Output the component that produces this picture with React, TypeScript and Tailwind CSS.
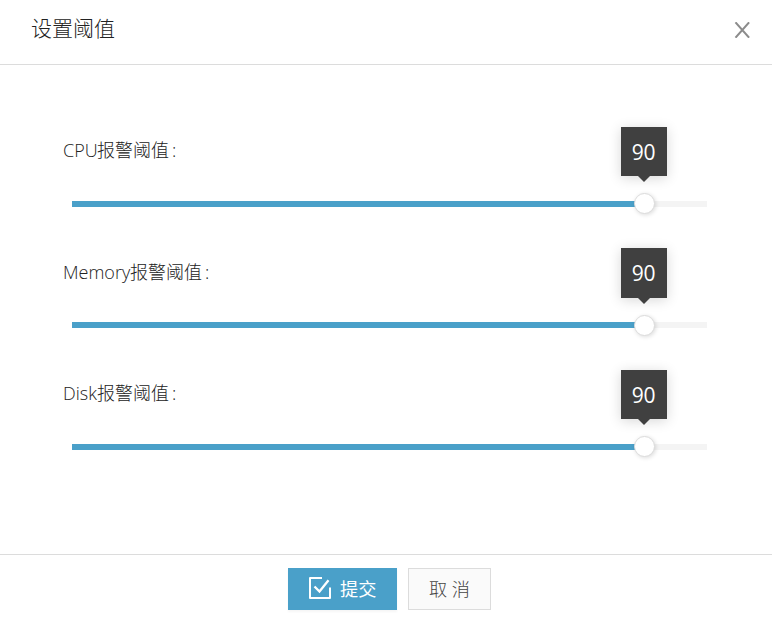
import React from 'react';

interface Threshold {
  key: string;
  label: string;
  labelClass: string;
  value: number;
}

const thresholds: Threshold[] = [
  { key: 'cpu', label: 'CPU', labelClass: 'w-[34px]', value: 90 },
  { key: 'memory', label: 'Memory', labelClass: 'w-[67px]', value: 90 },
  { key: 'disk', label: 'Disk', labelClass: 'w-[34px]', value: 90 },
];

const ThresholdSlider: React.FC<{ value: number }> = ({ value }) => (
  <div className="relative mx-[9px] h-1.5 bg-[#f4f4f4]">
    <div className="h-full bg-[#4aa0c9]" style={{ width: `${value}%` }}></div>

    {/* Handle with its value tooltip */}
    <div
      className="absolute top-[-7.8px] -ml-[10px] h-[21px] w-[21px] rounded-full border border-[#dcdcdc] bg-white shadow-[1px_1px_4px_rgba(0,0,0,0.14)]"
      style={{ left: `${value}%` }}
    ></div>
    <div
      className="absolute bottom-[30.6px] -ml-[23px] flex h-[49.4px] w-[46px] items-center justify-center bg-[#404040] pt-0.5 text-[21px] text-white shadow-[0_2px_12px_rgba(0,0,0,0.16)]"
      style={{ left: `${value}%` }}
    >
      <span className="tracking-[-0.3px]">{value}</span>
      <svg className="absolute top-full left-[17px]" width="12" height="6" viewBox="0 0 12 6">
        <path d="M0 0h12L6 6z" fill="#404040" />
      </svg>
    </div>
  </div>
);

const App: React.FC = () => {
  return (
    <div className="flex h-[619px] w-[772px] flex-col overflow-hidden bg-white font-['Open_Sans','Noto_Sans_CJK_SC',sans-serif]">
      {/* Header */}
      <header className="flex h-[65px] shrink-0 items-center justify-between border-b border-[#dcdcdc] pr-[22px] pb-1 pl-[31px]">
        <h1 className="pb-1 text-[21px] leading-none font-light text-[#222]">设置阈值</h1>
        <svg width="16" height="16" viewBox="0 0 16 16" fill="none" stroke="#8c8c8c" strokeWidth="2">
          <path d="M1.5 .3l13.6 15.4M15.1 .3l-13.6 15.4" />
        </svg>
      </header>

      {/* Sliders */}
      <main className="flex-1 pt-[65px] pr-14 pl-[63px]">
        {thresholds.map((item) => (
          <div key={item.key} className="h-[121.4px]">
            <div className="flex h-[41.4px] items-center text-[18px] font-light text-[#222]">
              <span className={`${item.labelClass} whitespace-nowrap`}>{item.label}</span>
              <span>报警阈值</span>
              <span className="ml-[3px]">:</span>
            </div>
            <div className="pt-[29.6px]">
              <ThresholdSlider value={item.value} />
            </div>
          </div>
        ))}
      </main>

      {/* Footer */}
      <footer className="flex h-[65px] shrink-0 justify-center gap-[11px] border-t border-[#dcdcdc] pt-[13px] pl-[7px]">
        <button className="flex h-[42px] w-[109px] items-center bg-[#4aa0c9] pl-[21px] text-[18.2px] text-white shadow-[0_2px_2px_rgba(0,0,0,0.04)]">
          <svg
            className="-mt-0.5"
            width="22"
            height="22"
            viewBox="0 0 22 22"
            fill="none"
            stroke="currentColor"
            strokeWidth="2"
            strokeLinejoin="round"
          >
            <path d="M13 1H1v20h20V10.5" />
            <path d="M5.5 9.5l5 5L19.5 3.2" strokeWidth="2.3" strokeLinejoin="miter" />
          </svg>
          <span className="mt-0.5 ml-[9px]">提交</span>
        </button>
        <button className="h-[42px] w-[83px] border border-[#dcdcdc] bg-[#fafafa] pt-0.5 text-[18.2px] font-light text-[#444]">
          取 消
        </button>
      </footer>
    </div>
  );
};

export default App;
